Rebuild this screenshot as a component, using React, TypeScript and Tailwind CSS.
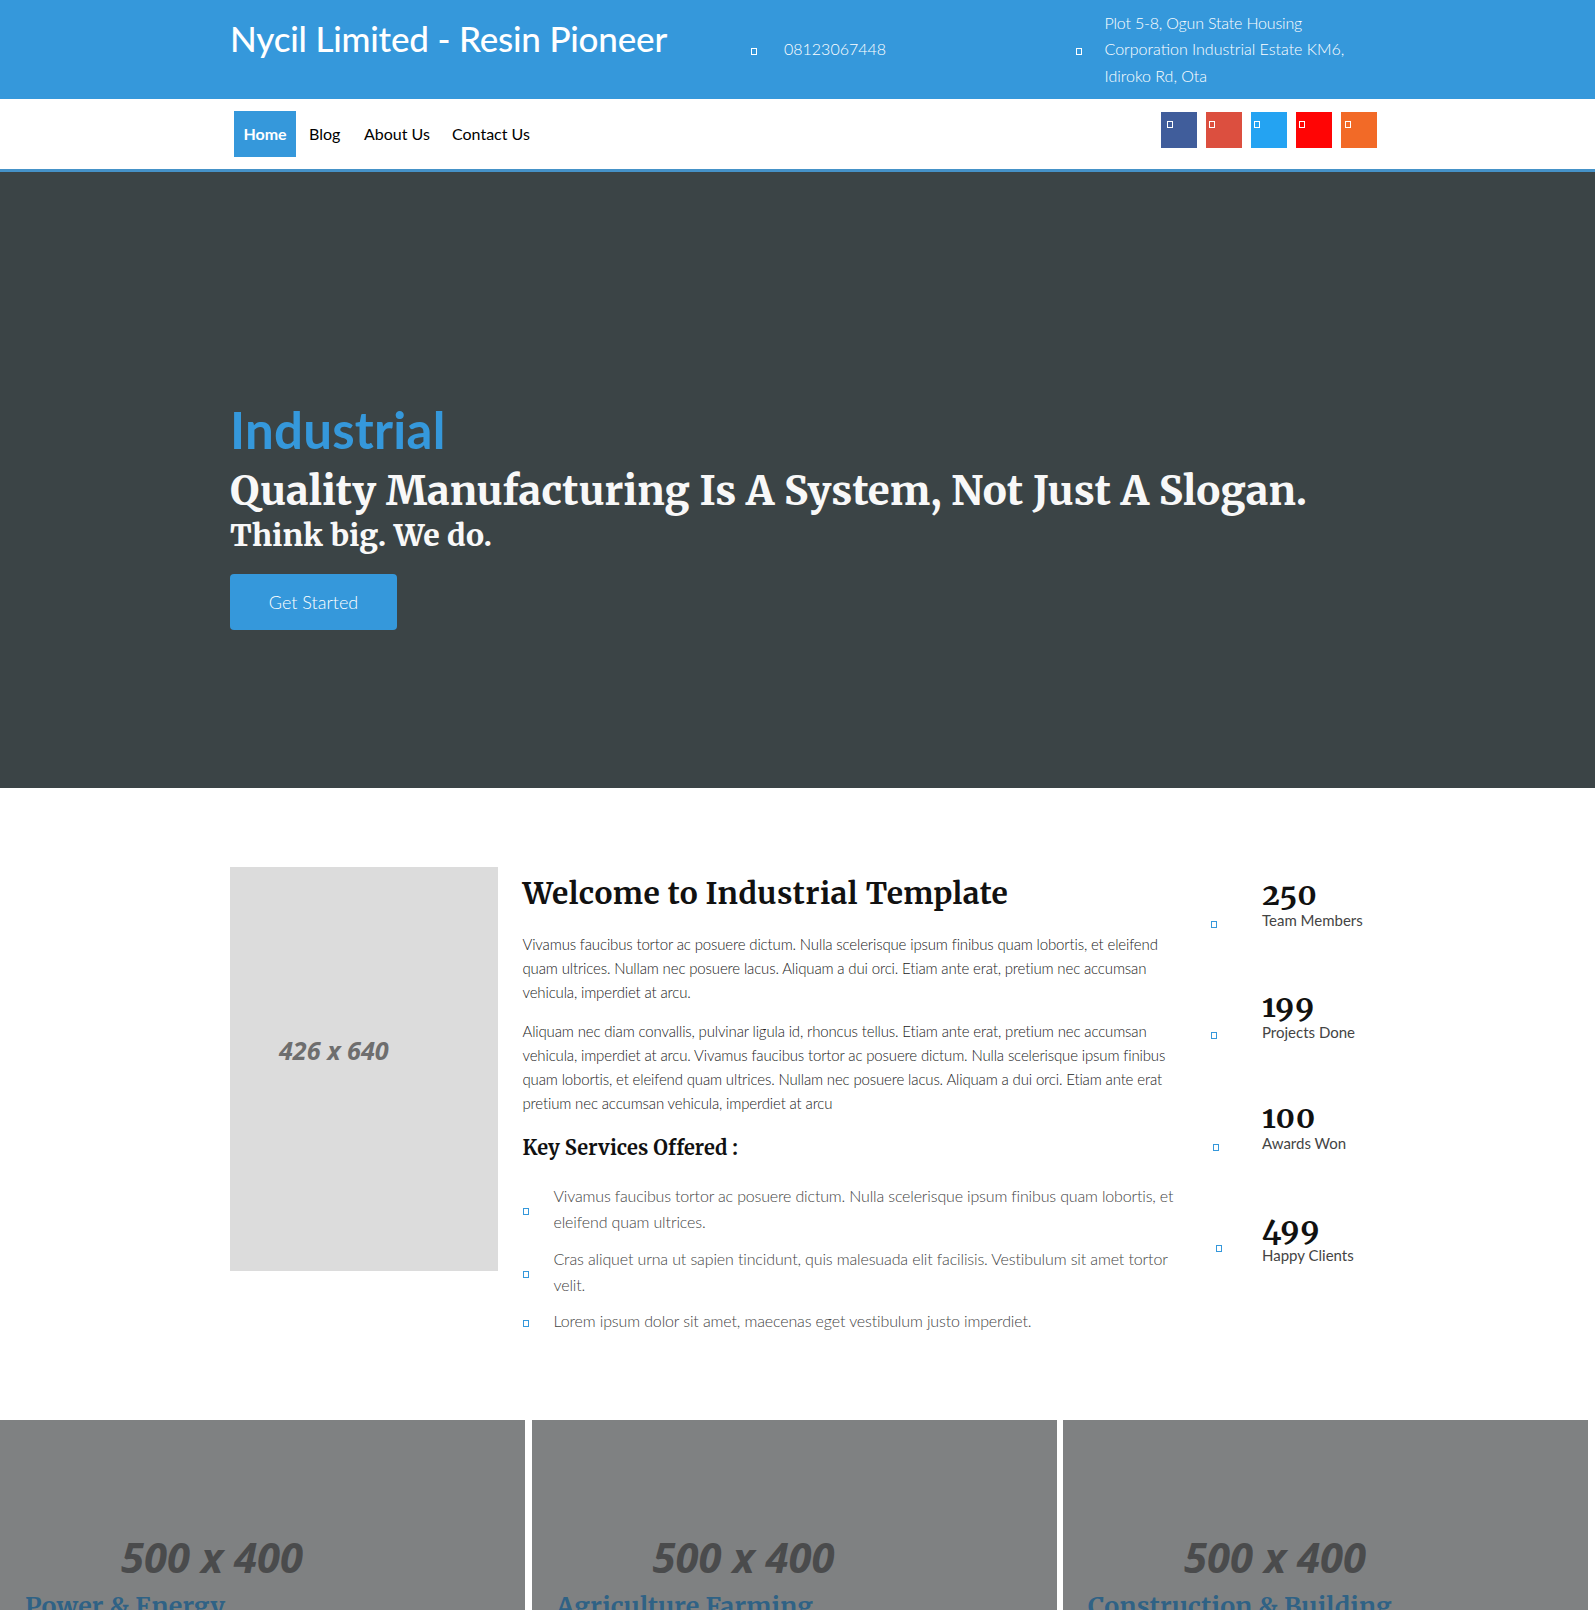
type BoxProps = { className?: string };

// Hollow glyph box that stands where an icon font has no glyph.
function GlyphBox({ className = "" }: BoxProps) {
  return <span className={`block h-[7px] w-[6px] shrink-0 border ${className}`} />;
}

const serif = "font-['Merriweather','Noto_Serif',serif]";

const socials = [
  { name: "Facebook", box: "bg-[#405d9b]", pad: "pl-[6px]" },
  { name: "Google", box: "bg-[#dc4f3f]", pad: "pl-[3px]" },
  { name: "Twitter", box: "bg-[#24a3f2]", pad: "pl-[3px]" },
  { name: "YouTube", box: "bg-[#ff0505]", pad: "pl-[3px]" },
  { name: "Feed", box: "bg-[#f26a27]", pad: "pl-[4px]" },
];

const stats = [
  { value: "250", label: "Team Members", icon: "ml-0 mt-[41px]" },
  { value: "199", label: "Projects Done", icon: "ml-0 mt-[40px]" },
  { value: "100", label: "Awards Won", icon: "ml-[2px] mt-[41px]" },
  { value: "499", label: "Happy Clients", icon: "ml-[5px] mt-[30px]" },
];

const cards = ["Power & Energy", "Agriculture Farming", "Construction & Building"];

function Header() {
  return (
    <header className="h-[99px] bg-[#3598db] text-white">
      <div className="flex h-full pl-[230px]">
        <div className="w-[521px] pt-[17px] text-[35px] font-medium leading-[42px] tracking-[-0.19px]">
          Nycil Limited - Resin Pioneer
        </div>
        <div className="flex w-[325px] items-start pt-[35px] text-base font-light leading-[27px]">
          <GlyphBox className="mt-[13px] border-white" />
          <span className="ml-[27px]">08123067448</span>
        </div>
        <div className="flex items-start text-base font-light leading-[26.5px]">
          <GlyphBox className="mt-[48px] border-white" />
          <address className="ml-[22.5px] pt-[9.5px] not-italic whitespace-nowrap">
            <span className="tracking-[-0.18px]">Plot 5-8, Ogun State Housing</span>
            <br />
            Corporation Industrial Estate KM6,
            <br />
            Idiroko Rd, Ota
          </address>
        </div>
      </div>
    </header>
  );
}

function Nav() {
  return (
    <nav className="flex h-[73px] border-b-[3px] border-[#4592c8] bg-white pl-[234px] pt-[12px] text-base leading-[46px] text-black">
      <a className="h-[46px] w-[62px] bg-[#3598db] text-center font-bold text-white">Home</a>
      <a className="ml-[13px] w-[55px]">Blog</a>
      <a className="w-[88px]">About Us</a>
      <a className="w-[709px]">Contact Us</a>
      <div className="flex gap-[9px] pt-px">
        {socials.map((s) => (
          <a key={s.name} aria-label={s.name} className={`h-9 w-9 pt-[9px] ${s.box} ${s.pad}`}>
            <GlyphBox className="border-white" />
          </a>
        ))}
      </div>
    </nav>
  );
}

function Hero() {
  return (
    <section className="h-[616px] bg-[#3b4446] pl-[230px] pt-[228px]">
      <h1 className="text-[51px] font-bold leading-[60px] tracking-[0.25px] text-[#3598db]">Industrial</h1>
      <h2 className={`${serif} mt-[6px] text-[40px] font-extrabold leading-[50px] tracking-[0.14px] whitespace-nowrap text-[#f8f8f8]`}>
        Quality Manufacturing Is A System, Not Just A Slogan.
      </h2>
      <h3 className={`${serif} text-[30px] font-extrabold leading-[38px] tracking-[0.17px] text-[#f8f8f8]`}>
        Think big. We do.
      </h3>
      <a className="mt-[20px] block h-[56px] w-[167px] rounded bg-[#3598db] text-center text-lg font-light leading-[57px] text-white">
        Get Started
      </a>
    </section>
  );
}

function Welcome() {
  return (
    <section className="flex h-[632px] bg-white pl-[230px] pt-[79px]">
      <div className="flex h-[404px] w-[268px] shrink-0 items-center bg-[#dcdcdc] pl-[49px] pb-[37px] font-['Open_Sans'] text-[25.2px] font-bold italic text-[#6e6e6e]">
        426 x 640
      </div>
      <div className="ml-[24.5px] w-[688px] shrink-0 text-black">
        <h2 className={`${serif} pt-[6px] text-[30px] font-bold leading-[40px] tracking-[0.47px] text-[#111]`}>
          Welcome to Industrial Template
        </h2>
        <p className="mt-[19px] text-[15px] font-light leading-[24.2px] tracking-[-0.15px] whitespace-nowrap text-[#222]">
          Vivamus faucibus tortor ac posuere dictum. Nulla scelerisque ipsum finibus quam lobortis, et eleifend
          <br />
          quam ultrices. Nullam nec posuere lacus. Aliquam a dui orci. Etiam ante erat, pretium nec accumsan
          <br />
          vehicula, imperdiet at arcu.
        </p>
        <p className="mt-[14px] text-[15px] font-light leading-[24.2px] tracking-[-0.15px] whitespace-nowrap text-[#222]">
          Aliquam nec diam convallis, pulvinar ligula id, rhoncus tellus. Etiam ante erat, pretium nec accumsan
          <br />
          vehicula, imperdiet at arcu. Vivamus faucibus tortor ac posuere dictum. Nulla scelerisque ipsum finibus
          <br />
          quam lobortis, et eleifend quam ultrices. Nullam nec posuere lacus. Aliquam a dui orci. Etiam ante erat
          <br />
          pretium nec accumsan vehicula, imperdiet at arcu
        </p>
        <h3 className={`${serif} mt-[18px] text-[20px] font-bold leading-[30px] tracking-[0.1px] text-[#111]`}>
          Key Services Offered :
        </h3>
        <ul className="mt-[20px] flex flex-col gap-[10.5px] text-base font-light leading-[26px] tracking-[-0.13px] whitespace-nowrap text-[#444]">
          <li className="flex items-center">
            <GlyphBox className="mt-[5px] border-[#3598db]" />
            <span className="ml-[25px]">
              <span className="tracking-[-0.16px]">
                Vivamus faucibus tortor ac posuere dictum. Nulla scelerisque ipsum finibus quam lobortis, et
              </span>
              <br />
              eleifend quam ultrices.
            </span>
          </li>
          <li className="flex items-center">
            <GlyphBox className="mt-[5px] border-[#3598db]" />
            <span className="ml-[25px]">
              Cras aliquet urna ut sapien tincidunt, quis malesuada elit facilisis. Vestibulum sit amet tortor
              <br />
              velit.
            </span>
          </li>
          <li className="flex items-center">
            <GlyphBox className="mt-[5px] border-[#3598db]" />
            <span className="ml-[25px]">Lorem ipsum dolor sit amet, maecenas eget vestibulum justo imperdiet.</span>
          </li>
        </ul>
      </div>
      <div className="pt-[13px]">
        {stats.map((s) => (
          <div key={s.label} className="flex h-[111.5px]">
            <div className="w-[51.5px]">
              <GlyphBox className={`${s.icon} border-[#3598db]`} />
            </div>
            <div>
              <div className={`${serif} text-[30px] font-bold leading-[28px] tracking-[0.9px] oldstyle-nums text-[#111]`}>
                {s.value}
              </div>
              <div className="mt-[3px] text-[15px] leading-[18px] text-[#444]">{s.label}</div>
            </div>
          </div>
        ))}
      </div>
    </section>
  );
}

function Cards() {
  return (
    <section className="grid h-[190px] grid-cols-[525px_525px_525px] gap-[6.5px] bg-white">
      {cards.map((title) => (
        <article key={title} className="overflow-hidden bg-[#7f8182] pt-[109px]">
          <div className="pl-[121px] font-['Open_Sans'] text-[41.8px] font-bold italic leading-[56px] text-[#4a4b4c]">
            500 x 400
          </div>
          <h3 className={`${serif} mt-[5px] pl-[25px] text-[25px] font-bold leading-[32px] tracking-[0.2px] text-[#2f6285]`}>
            {title}
          </h3>
        </article>
      ))}
    </section>
  );
}

export default function App() {
  return (
    <main className="h-[1610px] w-[1595px] overflow-hidden bg-white font-['Lato',sans-serif]">
      <Header />
      <Nav />
      <Hero />
      <Welcome />
      <Cards />
    </main>
  );
}
